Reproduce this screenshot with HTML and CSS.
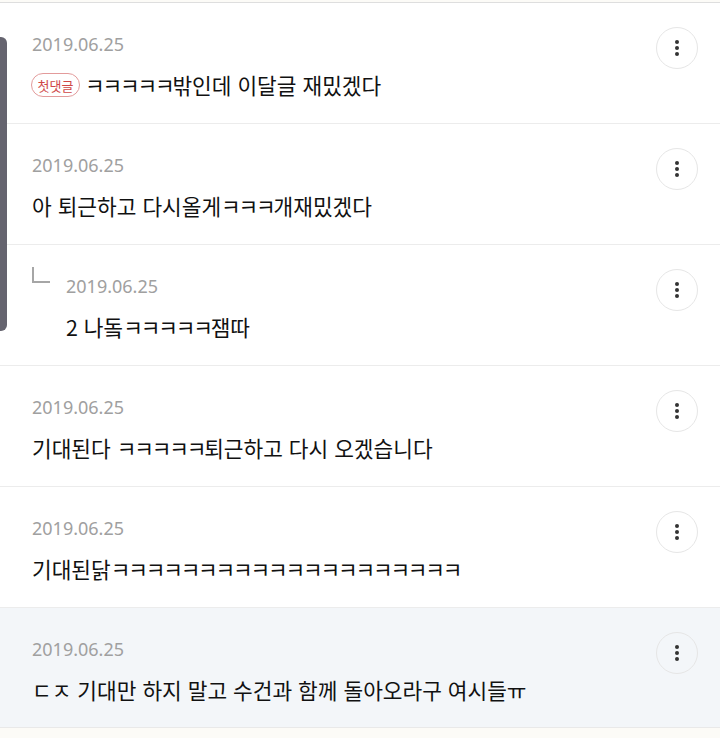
FILE: index.html
```html
<!DOCTYPE html>
<html lang="ko">
<head>
<meta charset="utf-8">
<link rel="stylesheet" href="styles.css">
</head>
<body>
<div class="scrollbar"></div>
<ul class="comments">
  <li class="comment">
    <div class="body">
      <div class="date">2019.06.25</div>
      <p class="text"><span class="badge">첫댓글</span><span class="kk">ㅋㅋㅋㅋㅋ</span>밖인데 이달글 재밌겠다</p>
    </div>
    <button class="more" aria-label="더보기"><span class="dot"></span><span class="dot"></span><span class="dot"></span></button>
  </li>
  <li class="comment">
    <div class="body">
      <div class="date">2019.06.25</div>
      <p class="text">아 퇴근하고 다시올게<span class="kk">ㅋㅋㅋ</span>개재밌겠다</p>
    </div>
    <button class="more" aria-label="더보기"><span class="dot"></span><span class="dot"></span><span class="dot"></span></button>
  </li>
  <li class="comment reply">
    <span class="reply-mark"></span>
    <div class="body">
      <div class="date">2019.06.25</div>
      <p class="text">2 나돜<span class="kk">ㅋㅋㅋㅋㅋ</span>잼따</p>
    </div>
    <button class="more" aria-label="더보기"><span class="dot"></span><span class="dot"></span><span class="dot"></span></button>
  </li>
  <li class="comment">
    <div class="body">
      <div class="date">2019.06.25</div>
      <p class="text">기대된다 <span class="kk">ㅋㅋㅋㅋㅋ</span>퇴근하고 다시 오겠습니다</p>
    </div>
    <button class="more" aria-label="더보기"><span class="dot"></span><span class="dot"></span><span class="dot"></span></button>
  </li>
  <li class="comment">
    <div class="body">
      <div class="date">2019.06.25</div>
      <p class="text">기대된닭<span class="kk">ㅋㅋㅋㅋㅋㅋㅋㅋㅋㅋㅋㅋㅋㅋㅋㅋㅋㅋㅋㅋ</span></p>
    </div>
    <button class="more" aria-label="더보기"><span class="dot"></span><span class="dot"></span><span class="dot"></span></button>
  </li>
  <li class="comment highlight">
    <div class="body">
      <div class="date">2019.06.25</div>
      <p class="text">ㄷㅈ 기대만 하지 말고 수건과 함께 돌아오라구 여시들ㅠ</p>
    </div>
    <button class="more" aria-label="더보기"><span class="dot"></span><span class="dot"></span><span class="dot"></span></button>
  </li>
</ul>
</body>
</html>
```
FILE: styles.css
```css
html, body {
  margin: 0;
  padding: 0;
  background: #fcfbf7;
  font-family: "Noto Sans CJK KR", "Noto Sans", sans-serif;
}

.comments {
  list-style: none;
  margin: 0;
  padding: 0;
  margin-top: 2px;
  border-top: 1px solid #dedede;
  border-bottom: 1px solid #e9e9e9;
}

.comment {
  display: flex;
  align-items: flex-start;
  height: 121px;
  box-sizing: border-box;
  padding: 0 22px 0 32px;
  background: #fff;
  border-bottom: 1px solid #ececec;
}

.comment:last-child {
  height: 119px;
  border-bottom: none;
}

.comment.highlight {
  background: #f3f6f9;
}

.body {
  flex: 1;
  min-width: 0;
  padding-top: 29px;
}

.date {
  font-family: "Noto Sans", sans-serif;
  font-size: 18px;
  line-height: 24px;
  color: #a0a0a0;
}

.text {
  margin: 15px 0 0;
  font-size: 21.4px;
  line-height: 28px;
  color: #111;
  display: flex;
  align-items: center;
  white-space: pre;
}

.kk {
  letter-spacing: -2.2px;
}

.badge {
  display: inline-flex;
  align-items: center;
  justify-content: center;
  box-sizing: border-box;
  width: 49px;
  height: 24px;
  margin-left: -1px;
  margin-right: 5px;
  border: 1px solid #e39b9b;
  border-radius: 12px;
  font-size: 13px;
  line-height: 1;
  color: #cf4747;
}

.reply-mark {
  flex: none;
  box-sizing: border-box;
  width: 18px;
  height: 16px;
  margin: 22px 16px 0 0;
  border-left: 2px solid #a6a6a6;
  border-bottom: 2px solid #a6a6a6;
}

.more {
  flex: none;
  width: 42px;
  height: 42px;
  margin-top: 24px;
  padding: 0;
  border: 1px solid #e6e6e6;
  border-radius: 50%;
  background: transparent;
  display: flex;
  flex-direction: column;
  align-items: center;
  justify-content: center;
  gap: 2px;
}

.dot {
  width: 4px;
  height: 4px;
  border-radius: 50%;
  background: #333;
}

.scrollbar {
  position: absolute;
  left: 0;
  top: 37px;
  width: 7px;
  height: 294px;
  background: #65646f;
  border-radius: 0 6px 6px 0;
  z-index: 2;
}
```
